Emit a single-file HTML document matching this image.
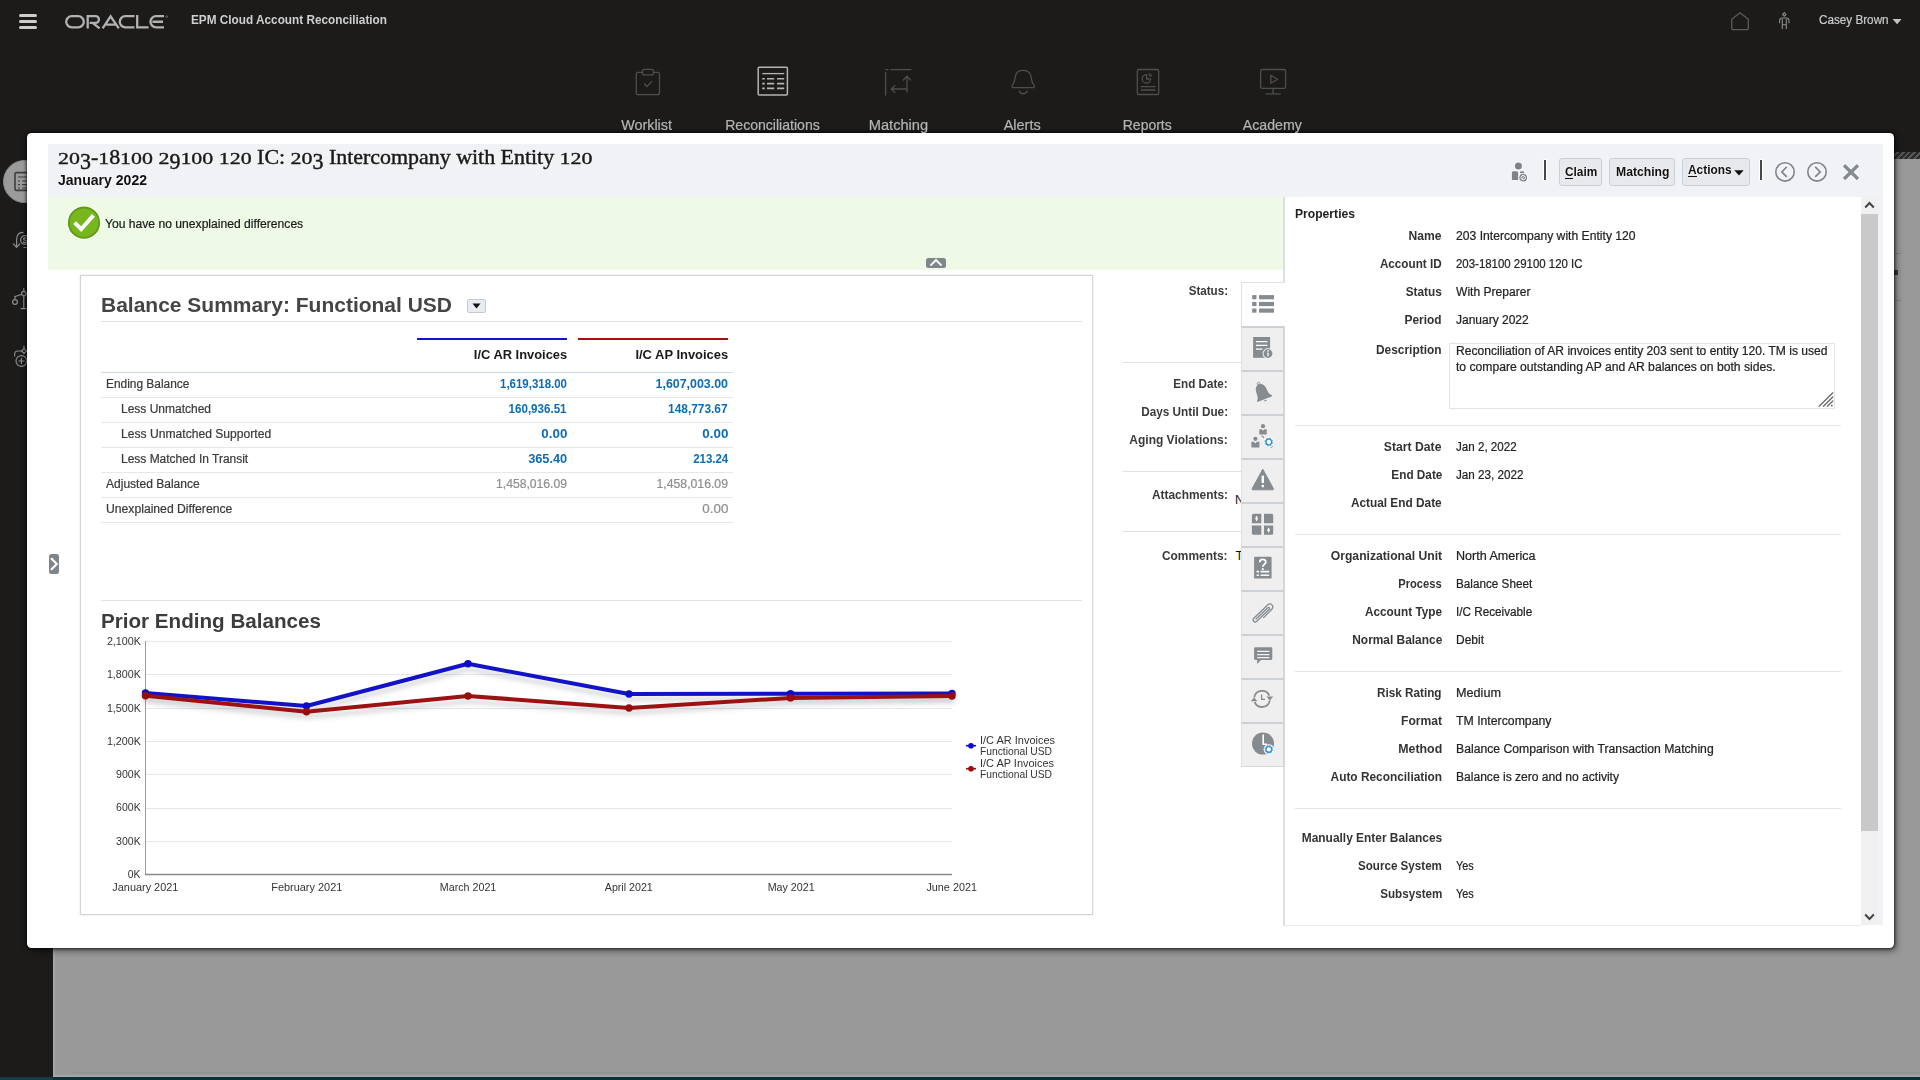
<!DOCTYPE html>
<html><head><meta charset="utf-8"><title>Reconciliation</title>
<style>
*{box-sizing:border-box;margin:0;padding:0}
html,body{width:1920px;height:1080px;overflow:hidden;background:#1c1b1a;font-family:"Liberation Sans",sans-serif;}
.a{position:absolute}
.t{position:absolute;white-space:pre;line-height:1}
.sf{font-family:"Liberation Serif",serif}
.d{display:inline-block;transform:scaleY(.8);transform-origin:0 83.75%}.q{display:inline-block;transform:translateY(.23em) scaleY(1.06);transform-origin:0 83.75%}
.hl{position:absolute;height:1px;background:#d9e0e6}
svg{position:absolute;overflow:visible}
#greybg{left:53px;top:152px;width:1867px;height:925px;background:#999}
#teal{left:0;top:1077px;width:1920px;height:3px;background:linear-gradient(90deg,#163d43 0 53px,#0b3136 53px)}
#dlg{left:27px;top:133px;width:1867px;height:815px;background:#fff;border-radius:4.5px;box-shadow:0 0 3px 1px rgba(0,0,0,.6),2px 3px 7px rgba(0,0,0,.45)}
#dhead{left:48px;top:144px;width:1835px;height:781px;background:#f1f2f6}
#white{left:48px;top:270px;width:1236px;height:655px;background:#fff}
#green{left:48px;top:197px;width:1235px;height:73px;background:#effae6}
#panel{left:80px;top:275px;width:1013px;height:640px;background:#fff;border:1px solid #d4d4d4;box-shadow:0 0 2px rgba(0,0,0,.12)}
#props{left:1283px;top:197px;width:578px;height:729px;background:#fff;border-left:2px solid #dbdfe4;border-bottom:1px solid #ececec}
#sbtrack{left:1861px;top:197px;width:17px;height:728px;background:#f0f0f0}
#sbthumb{left:1861px;top:214px;width:17px;height:617px;background:#c9c9c9}
.btn{position:absolute;top:158px;height:28px;border:1px solid #c8d1da;border-radius:3px;background:#e8e9ec}
.sep{position:absolute;top:160px;width:2px;height:20px;background:#474747}
.tab{position:absolute;left:1241px;width:44px;height:44px;background:#efefef;border-left:1px solid #dde1e5;border-right:2px solid #d3d6db;border-top:2px solid #cdd1d6}
</style></head><body>
<div class="a" id="greybg"></div>
<div class="a" id="teal"></div>
<!-- hamburger -->
<div class="a" style="left:19px;top:14px;width:18px;height:3px;border-radius:1.5px;background:#cdcdcd"></div>
<div class="a" style="left:19px;top:20px;width:18px;height:3px;border-radius:1.5px;background:#cdcdcd"></div>
<div class="a" style="left:19px;top:26px;width:18px;height:3px;border-radius:1.5px;background:#cdcdcd"></div>
<!-- ORACLE logo -->
<svg style="left:65px;top:14.8px" width="104" height="14" viewBox="0 0 104 14"><g fill="none" stroke="#b2b2b2" stroke-width="2.3">
<path d="M6.75 1.2 H13.25 A5.55 5.55 0 0 1 13.25 12.3 H6.75 A5.55 5.55 0 0 1 6.75 1.2 Z"/>
<path d="M22.7 13.6 V1.2 H30.6 A3.3 3.3 0 0 1 30.6 7.9 H24.6 M27.6 7.9 L34.6 13.4"/>
<path d="M37.6 13.4 L45.6 1.4 L53.8 13.4 M41.2 9.6 H51"/>
<path d="M69.5 1.2 H60.3 A5.55 5.55 0 0 0 60.3 12.3 H69.5"/>
<path d="M72.2 0 V12.3 H83.6"/>
<path d="M99 1.2 H91 A5.55 5.55 0 0 0 91 12.3 H99 M87.4 6.75 H98"/>
</g><circle cx="101.6" cy="1.6" r="0.9" fill="none" stroke="#9a9a9a" stroke-width=".5"/></svg>
<!-- nav icons -->
<svg style="left:0;top:0" width="1920" height="133" viewBox="0 0 1920 133"><g fill="none" stroke="#4e4e4e" stroke-width="1.3" stroke-linecap="round" stroke-linejoin="round">
<!-- worklist -->
<rect x="636.3" y="72.3" width="23.2" height="22.4" rx="2"/><rect x="642.5" y="69.3" width="11" height="5.6" rx="2" fill="#1c1b1a"/><path d="M644.6 84 L647 86.6 L651.6 81.6"/>
<!-- matching -->
<path d="M885.6 72.5 V95 M885.8 69.6 H888 M891 69.6 H911 M907 92 V76.5 M903.4 80 L907 76.2 L910.6 80 M907 89 H891.5 M895 85.4 L891.2 89 L895 92.6"/>
<!-- alerts -->
<path d="M1013 87.6 H1033.5 C1034.6 87.6 1034.6 86 1034 85.2 C1031.6 82 1031.4 80 1031.2 77.6 C1030.8 73 1027.6 70.4 1023.2 70.4 C1018.8 70.4 1015.6 73 1015.2 77.6 C1015 80 1014.8 82 1012.4 85.2 C1011.8 86 1011.9 87.6 1013 87.6 Z"/><path d="M1019.2 91 C1020.6 94.6 1025.8 94.6 1027.2 91"/>
<!-- reports -->
<rect x="1137.3" y="69.5" width="21.4" height="25" rx="1.6"/><path d="M1150.6 79 A4.2 4.2 0 1 1 1146.6 74.6 V79 Z"/><path d="M1149.6 73.6 A3 3 0 0 1 1151.8 76 L1149.6 76 Z" stroke-width="1"/><path d="M1141.2 86.7 H1155 M1141.2 90 H1155"/>
<!-- academy -->
<rect x="1260.6" y="69.5" width="25" height="18.8" rx="1.6"/><path d="M1273.1 88.4 V93.8 M1266 93.9 H1280.2 M1270.8 75.2 V83.2 L1277.6 79.2 Z"/>
</g>
<!-- reconciliations (active) -->
<g fill="none" stroke="#b4b4b4" stroke-width="1.5"><rect x="758.2" y="67.2" width="29.2" height="27.8" rx="1"/><path d="M762.2 73.6 H784.2" stroke-width="1.3"/>
<path d="M762.2 78.8 H764.8 M767 78.8 H774.2 M777 78.8 H784.2 M762.2 83.6 H764.8 M767 83.6 H774.2 M777 83.6 H784.2 M762.2 88.4 H764.8 M767 88.4 H774.2 M777 88.4 H784.2" stroke-width="1.6"/></g>
<!-- home -->
<path d="M1731.8 28.6 V19.2 L1740 12.8 L1748.3 19.2 V28.6 Q1748.3 29.6 1747.3 29.6 H1732.8 Q1731.8 29.6 1731.8 28.6 Z" fill="none" stroke="#5c5c5c" stroke-width="1.3" stroke-linejoin="round"/>
<!-- person -->
<g fill="none" stroke="#8c8c8c" stroke-width="1.1"><path d="M1784.3 12.6 L1786 14.4 L1784.3 16.2 L1782.6 14.4 Z"/><path d="M1779.6 23.2 V20.6 Q1779.6 18 1782.4 18 H1786.2 Q1789 18 1789 20.6 V23.2 M1782.3 19 V29 M1786.3 19 V29 M1782.3 24.8 H1786.3"/></g>
<!-- user arrow -->
<path d="M1892.6 19 H1901.6 L1897.1 24.2 Z" fill="#c4c4c4"/>
</svg>

<!-- left nav (mostly hidden behind dialog) -->
<div class="a" style="left:3px;top:160px;width:43px;height:43px;border-radius:50%;background:#9b9b9b;border:1px solid #8a8a8a"></div>
<svg style="left:0;top:150px" width="53" height="240" viewBox="0 150 53 240"><g fill="none" stroke="#3e3e3e" stroke-width="1.6">
<rect x="15" y="172.6" width="20" height="17.8" rx="1.5"/><path d="M18 177 H32 M18 181 H20 M22 181 H32 M18 184.6 H20 M22 184.6 H32 M18 188 H20 M22 188 H32" stroke-width="1.2"/></g>
<g fill="none" stroke="#8a8a8a" stroke-width="1.2" stroke-linecap="round">
<path d="M23 232.4 C18 232.4 16.6 236 16.6 240 V247 M13.6 244 L16.6 247.4 L19.6 244"/><circle cx="25" cy="240" r="4.4"/><path d="M26.4 238.4 C25 237.2 23.4 238 23.6 239.2 C23.8 240.6 26.6 240 26.6 241.6 C26.6 243 24.4 243 23.4 242"/><path d="M24 247.5 H30"/>
<path d="M23.8 288.6 V308 M21 308.6 H30 M15 296.5 L23.8 293.6 L30 295.5"/><circle cx="23.8" cy="293.6" r="2.2" fill="#1c1b1a"/><circle cx="15" cy="302" r="2.4"/><path d="M15 296.5 V299.6"/>
<path d="M14.6 356 V354.4 Q14.6 351 18 351 H22"/><path d="M24 348.6 L26.4 351 L24 353.4 L21.6 351 Z"/><path d="M24 346 V348 M26.6 351 H28"/><circle cx="21.4" cy="361" r="5.4"/><path d="M21.4 358.4 V363.6 M18.8 361 H24"/>
</g></svg>
<!-- right side: hatched strip + hints of underlying page -->
<div class="a" style="left:1894px;top:152px;width:26px;height:7px;background:repeating-linear-gradient(135deg,#2a2a2a 0 2px,#565656 2px 4px)"></div>
<div class="a" style="left:1894px;top:253px;width:7px;height:1px;background:#858585"></div>
<div class="a" style="left:1894px;top:270px;width:4px;height:5px;background:#3a3a3a"></div>
<div class="a" style="left:1894px;top:300px;width:7px;height:1px;background:#858585"></div>
<div class="a" style="left:73px;top:1072px;width:1847px;height:1px;background:#8a9191"></div>
<div class="a" style="left:53px;top:1075px;width:1867px;height:2px;background:#a5a5a5"></div>
<div class="a" style="left:53px;top:159px;width:2px;height:918px;background:#a6a6a6"></div>

<div class="a" id="dlg"></div>
<div class="a" id="dhead"></div>
<div class="a" id="white"></div>
<div class="a" id="green"></div>
<div class="a" id="panel"></div>
<!-- person/claim icon -->
<svg style="left:1508px;top:160px" width="24" height="24" viewBox="1508 160 24 24"><g style="filter:drop-shadow(0 0 1px #fff)">
<circle cx="1518.4" cy="166.1" r="3.5" fill="#7d8388"/>
<path d="M1511.9 172.6 Q1511.9 171.2 1513.3 171.2 H1516.6 Q1518.2 171.2 1518.2 172.8 V179.9 H1511.9 Z" fill="#7d8388"/>
<path d="M1520 173.2 V172.4 Q1520 171.2 1521.2 171.2 H1523 Q1524.2 171.2 1524.2 172.4 V173.2 Z" fill="#7d8388"/>
<circle cx="1523.2" cy="177.6" r="4.6" fill="#fff"/><circle cx="1523.2" cy="177.6" r="3.9" fill="#7d8388"/>
<circle cx="1523.2" cy="177.6" r="2.2" fill="none" stroke="#fff" stroke-width=".9"/><path d="M1521.7 179.1 L1524.7 176.1" stroke="#fff" stroke-width=".9"/></g></svg>
<div class="sep" style="left:1544px;box-shadow:0 0 1px 1px #fff"></div>
<div class="btn" style="left:1559px;width:43px"></div>
<div class="btn" style="left:1609px;width:66px"></div>
<div class="btn" style="left:1682px;width:68px"></div>
<div class="a" style="left:1565px;top:177.6px;width:8px;height:1.2px;background:#111"></div>
<div class="a" style="left:1688px;top:176.4px;width:8.5px;height:1px;background:#111"></div>
<svg style="left:1734px;top:169.6px" width="10" height="6" viewBox="0 0 10 6"><path d="M0.3 0.2 H9.7 L5 5.6 Z" fill="#111"/></svg>
<div class="sep" style="left:1760px;box-shadow:0 0 1px 1px #fff"></div>
<svg style="left:1770px;top:158px" width="95" height="28" viewBox="1770 158 95 28"><g fill="none" stroke="#7d8388" style="filter:drop-shadow(0 0 1px #fff)">
<circle cx="1785" cy="171.9" r="9.2" stroke-width="1.6"/><path d="M1786.8 166.9 L1781.8 171.9 L1786.8 176.9" stroke-width="1.7"/>
<circle cx="1817" cy="171.9" r="9.2" stroke-width="1.6"/><path d="M1815.2 166.9 L1820.2 171.9 L1815.2 176.9" stroke-width="1.7"/>
<path d="M1844 165.2 L1858 179 M1858 165.2 L1844 179" stroke="#858a8f" stroke-width="3.3"/></g></svg>
<!-- green check -->
<svg style="left:66px;top:204px" width="36" height="37" viewBox="66 204 36 37">
<circle cx="84" cy="222.7" r="17" fill="#fff"/><circle cx="84" cy="222.7" r="15.2" fill="#77b61c" stroke="#5f9c16" stroke-width="1.8"/>
<path d="M74.6 222.6 L81.2 229.2 L93.4 215.4" fill="none" stroke="#fff" stroke-width="4"/></svg>
<!-- collapse handle on green band -->
<div class="a" style="left:926px;top:258px;width:20px;height:10px;border-radius:2.5px;background:#7e858b"></div>
<svg style="left:929px;top:258px" width="14" height="10" viewBox="0 0 14 10"><path d="M1.4 7.6 L7 2 L12.6 7.6" fill="none" stroke="#fff" stroke-width="2"/></svg>
<!-- left splitter handle -->
<div class="a" style="left:49px;top:554px;width:10px;height:20px;border-radius:2.5px;background:#7e858b"></div>
<svg style="left:50px;top:557px" width="9" height="14" viewBox="0 0 9 14"><path d="M1.6 1.8 L6.8 7 L1.6 12.2" fill="none" stroke="#fff" stroke-width="2.2" stroke-linecap="round"/></svg>

<!-- balance summary lines -->
<div class="hl" style="left:101px;top:321px;width:981px;background:#dde3e9"></div>
<div class="a" style="left:467px;top:299px;width:19px;height:14px;border:1px solid #c3ccd5;border-radius:2px;background:#e9ecf0"></div>
<svg style="left:472px;top:303px" width="9" height="6" viewBox="0 0 9 6"><path d="M0.5 0.5 L8.5 0.5 L4.5 5.5 Z" fill="#111"/></svg>
<div class="a" style="left:417px;top:338px;width:150px;height:2px;background:#1313cc"></div>
<div class="a" style="left:578px;top:338px;width:150px;height:2px;background:#a51111"></div>
<div class="hl" style="left:101px;top:372px;width:632px;background:#cfd9e2"></div>
<div class="hl" style="left:101px;top:397px;width:632px;background:#e6e9ec"></div>
<div class="hl" style="left:101px;top:422px;width:632px;background:#e6e9ec"></div>
<div class="hl" style="left:101px;top:447px;width:632px;background:#e6e9ec"></div>
<div class="hl" style="left:101px;top:472px;width:632px;background:#e6e9ec"></div>
<div class="hl" style="left:101px;top:497px;width:632px;background:#e6e9ec"></div>
<div class="hl" style="left:101px;top:522px;width:632px;background:#e6e9ec"></div>
<div class="hl" style="left:101px;top:600px;width:981px;background:#dde3e9"></div>

<svg style="left:0;top:0" width="1920" height="1080" viewBox="0 0 1920 1080">
<defs><filter id="sh" x="-5%" y="-50%" width="110%" height="200%"><feGaussianBlur stdDeviation="2.2"/></filter></defs>
<g stroke="#e3e8ed" stroke-width="1" shape-rendering="crispEdges">
<line x1="146" x2="952" y1="641.5" y2="641.5"/><line x1="146" x2="952" y1="674.5" y2="674.5"/><line x1="146" x2="952" y1="708.5" y2="708.5"/><line x1="146" x2="952" y1="741.5" y2="741.5"/><line x1="146" x2="952" y1="774.5" y2="774.5"/><line x1="146" x2="952" y1="808.5" y2="808.5"/><line x1="146" x2="952" y1="841.5" y2="841.5"/>
</g>
<line x1="145.5" x2="145.5" y1="641" y2="875" stroke="#9a9a9a" stroke-width="1"/>
<line x1="145" x2="952" y1="874.5" y2="874.5" stroke="#8a8a8a" stroke-width="1.4"/>
<g fill="none" stroke-linejoin="round" stroke-linecap="round">
<polyline points="145.5,698 306.5,711 468,669 629,699 790.5,699 952,698.5" stroke="#5a6270" stroke-opacity=".2" stroke-width="5" filter="url(#sh)"/>
<polyline points="145.5,701 306.5,717 468,701.5 629,713 790.5,703 952,701" stroke="#5a6270" stroke-opacity=".2" stroke-width="5" filter="url(#sh)"/>
<polyline points="145.5,693 306.5,706 468,663.8 629,694 790.5,693.7 952,693.4" stroke="#1212c6" stroke-width="4"/>
<polyline points="145.5,695.8 306.5,711.8 468,696 629,708 790.5,697.9 952,696" stroke="#9c1212" stroke-width="4"/>
</g>
<g fill="#0b0bd0"><circle cx="145.5" cy="693" r="3.7"/><circle cx="306.5" cy="706" r="3.7"/><circle cx="468" cy="663.8" r="3.7"/><circle cx="629" cy="694" r="3.7"/><circle cx="790.5" cy="693.7" r="3.7"/><circle cx="952" cy="693.4" r="3.7"/></g>
<g fill="#9a0c0c"><circle cx="145.5" cy="695.8" r="3.7"/><circle cx="306.5" cy="711.8" r="3.7"/><circle cx="468" cy="696" r="3.7"/><circle cx="629" cy="708" r="3.7"/><circle cx="790.5" cy="697.9" r="3.7"/><circle cx="952" cy="696" r="3.7"/></g>
<!-- legend -->
<line x1="966" x2="976" y1="745.7" y2="745.7" stroke="#1010c8" stroke-width="1.6"/><circle cx="971" cy="745.7" r="2.8" fill="#0b0bd0"/>
<line x1="966" x2="976" y1="768.7" y2="768.7" stroke="#9c1212" stroke-width="1.6"/><circle cx="971" cy="768.7" r="2.8" fill="#9a0c0c"/>
</svg>

<div class="hl" style="left:1123px;top:362px;width:119px;background:#dbe2e8"></div>
<div class="hl" style="left:1123px;top:471px;width:119px;background:#dbe2e8"></div>
<div class="hl" style="left:1123px;top:531px;width:119px;background:#dbe2e8"></div>

<div class="a" id="props"></div>
<div class="a" id="sbtrack"></div>
<div class="a" id="sbthumb"></div>
<div class="a" style="left:1449px;top:343px;width:386px;height:66px;border:1px solid #e2e6ea;background:#fff"></div>
<svg style="left:1816px;top:390px" width="18" height="18" viewBox="1816 390 18 18"><g stroke="#666" stroke-width="1.25" stroke-linecap="round"><path d="M1819.2 406.2 L1832.8 392.8 M1823.4 406.2 L1832.8 397 M1827.4 406.2 L1832.8 401"/></g><rect x="1831" y="404.8" width="1.6" height="1.6" fill="#666"/></svg>
<div class="hl" style="left:1295px;top:425px;width:546px;background:#e0e6ea"></div>
<div class="hl" style="left:1295px;top:534px;width:546px;background:#e0e6ea"></div>
<div class="hl" style="left:1295px;top:671px;width:546px;background:#e0e6ea"></div>
<div class="hl" style="left:1295px;top:808px;width:546px;background:#e0e6ea"></div>
<svg style="left:1864px;top:201px" width="11" height="8" viewBox="0 0 11 8"><path d="M1.2 6.5 L5.5 2 L9.8 6.5" fill="none" stroke="#444" stroke-width="2"/></svg>
<svg style="left:1864px;top:913px" width="11" height="8" viewBox="0 0 11 8"><path d="M1.2 1.5 L5.5 6 L9.8 1.5" fill="none" stroke="#444" stroke-width="2"/></svg>

<!-- partial cut-off text -->
<div class="a" style="left:1234px;top:490px;width:7px;height:20px;overflow:hidden"><div class="t" style="left:1px;top:4.2px;font-size:12.5px;color:#111">No</div></div>
<div class="a" style="left:1234px;top:546px;width:7px;height:20px;overflow:hidden"><div class="t" style="left:1.4px;top:4.4px;font-size:12.5px;color:#111">Th</div></div>
<!-- tabs -->
<div class="tab" style="top:325.5px"></div><div class="tab" style="top:369.5px"></div><div class="tab" style="top:413.5px"></div><div class="tab" style="top:457.5px"></div><div class="tab" style="top:501.5px"></div><div class="tab" style="top:545.5px"></div><div class="tab" style="top:589.5px"></div><div class="tab" style="top:633.5px"></div><div class="tab" style="top:677.5px"></div><div class="tab" style="top:721.5px;height:45px;border-bottom:1px solid #d6dade"></div>
<div class="a" style="left:1240.5px;top:282px;width:44.5px;height:43.5px;background:#fff;border:1.5px solid #dce1e6;border-right:0;border-bottom:0"></div>
<svg style="left:1241px;top:282px" width="44" height="484" viewBox="1241 282 44 484">
<g fill="#868b90">
<!-- 1 list -->
<rect x="1252.2" y="295.1" width="4.3" height="4.2"/><rect x="1259" y="295.1" width="15" height="4.2"/><rect x="1252.2" y="301.9" width="4.3" height="4.2"/><rect x="1259" y="301.9" width="15" height="4.2"/><rect x="1252.2" y="308.5" width="4.3" height="4.2"/><rect x="1259" y="308.5" width="15" height="4.2"/>
<!-- 2 doc info -->
<rect x="1253.1" y="337" width="17" height="20.8"/>
<!-- 3 bell -->
<g transform="translate(-0.8 -0.4) rotate(-22 1262.5 392) translate(1262.5 392) scale(.93) translate(-1262.5 -392)"><path d="M1254.2 399.4 C1257 396.6 1256.6 393 1256.8 390.4 C1257.2 386 1259.6 383.6 1262.6 383.6 C1265.6 383.6 1268 386 1268.4 390.4 C1268.6 393 1268.2 396.6 1271 399.4 C1271.6 400 1271.2 400.8 1270.4 400.8 H1254.8 C1254 400.8 1253.6 400 1254.2 399.4 Z"/><circle cx="1262.6" cy="382.8" r="1.5" fill="none" stroke="#868b90" stroke-width=".8"/><path d="M1261 402 H1264.2 V403 H1261 Z"/></g>
<!-- 4 people -->
<circle cx="1263" cy="426.2" r="2.1"/><path d="M1259.3 429.2 H1261.6 L1263 430.8 L1264.4 429.2 H1266.7 V434.6 H1259.3 Z"/>
<circle cx="1255.4" cy="438.8" r="2.1"/><path d="M1251.4 441.8 H1254 L1255.4 443.4 L1256.8 441.8 H1259.4 V447.4 H1251.4 Z"/>
<!-- 5 warning -->
<path d="M1262.8 469.2 L1273.4 488.6 Q1273.8 489.8 1272.6 489.8 H1252.8 Q1251.6 489.8 1252.2 488.6 Z" stroke="#868b90" stroke-width="1" stroke-linejoin="round"/>
<!-- 6 grid -->
<path d="M1251.9 515.4 Q1251.9 513.8 1253.5 513.8 H1261.3 V523.2 H1251.9 Z M1264 513.8 H1271.6 Q1273.2 513.8 1273.2 515.4 V523.2 H1264 Z M1251.9 525.4 H1261.3 V534.8 H1253.5 Q1251.9 534.8 1251.9 533.2 Z M1264 525.4 H1273.2 V533.2 Q1273.2 534.8 1271.6 534.8 H1264 Z"/>
<!-- 7 question doc -->
<rect x="1254.1" y="556.8" width="17.5" height="21.8" rx="1.2"/>
<!-- 9 comment -->
<path d="M1255.4 647.2 H1271 Q1272.3 647.2 1272.3 648.5 V658.6 Q1272.3 659.9 1271 659.9 H1261 L1257.2 664 V659.9 H1255.4 Q1254.1 659.9 1254.1 658.6 V648.5 Q1254.1 647.2 1255.4 647.2 Z"/>
<!-- 11 clock -->
<circle cx="1263" cy="743.6" r="11"/>
</g>
<g fill="none" stroke="#fff">
<path d="M1256 341.6 H1267.4 M1256 345.4 H1267.4 M1256 349.2 H1262.4" stroke-width="1.3"/>
<path d="M1262.8 475.6 V483" stroke-width="2.4"/><path d="M1262.8 484.8 V487.2" stroke-width="2.4"/>
<path d="M1257.2 654.6 H1269.4 M1257.2 651.4 H1269.4 M1257.2 657.6 H1269.4" stroke-width="1.2" opacity=".9"/>
<path d="M1263.2 734.6 V744.2 H1267" stroke-width="1.6"/>
<path d="M1256.6 571.6 H1259 M1260.6 571.6 H1269.2 M1256.6 575.2 H1259 M1260.6 575.2 H1269.2" stroke-width="1.6"/>
<path d="M1259.8 562.2 C1259.8 558.6 1265.8 558.6 1265.8 562 C1265.8 564.4 1262.8 564.4 1262.8 566.8" stroke-width="1.8"/><path d="M1262.8 568.2 V570" stroke-width="1.8"/>
</g>
<g fill="#fff"><path d="M1256.6 515.6 L1258 518.5 L1256.6 521.4 L1255.2 518.5 Z M1268.6 527.2 L1270 530.1 L1268.6 533 L1267.2 530.1 Z"/></g>
<!-- info badge -->
<circle cx="1268" cy="353.5" r="5.4" fill="#efefef"/><circle cx="1268" cy="353.5" r="4.4" fill="#868b90"/><path d="M1268 352.6 V356.2" stroke="#fff" stroke-width="1.3"/><circle cx="1268" cy="350.9" r=".8" fill="#fff"/>
<!-- gear badge tab4 -->
<path d="M1261.6 436 Q1263.4 436.4 1263.8 438" fill="none" stroke="#868b90" stroke-width="1.2"/><path d="M1272.4 445.6 Q1272 447 1270.6 447.4" fill="none" stroke="#868b90" stroke-width="1.2"/>
<circle cx="1268.8" cy="442" r="5.2" fill="#fff"/><circle cx="1268.8" cy="442" r="2.9" fill="none" stroke="#3b96d3" stroke-width="1.5"/><circle cx="1268.8" cy="442" r="4" fill="none" stroke="#3b96d3" stroke-width=".9" stroke-dasharray="1.5 1.65"/>
<!-- paperclip -->
<g fill="none" stroke="#868b90" stroke-width="1.3" stroke-linecap="round"><path d="M1263.6 617.6 L1271.8 609.2 C1274.6 606.2 1270.6 602 1267.6 605 L1253.8 618.2 C1251.6 620.4 1254.6 623.2 1256.8 621.2 L1269.2 609.2 C1270.4 608 1269 606.8 1267.8 607.8 L1256 619"/></g>
<!-- history -->
<g fill="none" stroke="#868b90" stroke-width="1.8"><path d="M1254.2 697.4 A8 8 0 0 1 1269.4 695.6"/><path d="M1269.8 700.4 A8 8 0 0 1 1254.6 702.2"/><path d="M1261.6 694.6 V699.4 H1265" stroke-width="1.3"/></g>
<path d="M1266.4 696.6 H1273.2 L1270 700.4 Z M1250.8 701.2 H1257.6 L1254 697.4 Z" fill="#868b90"/>
<!-- gear badge tab11 -->
<circle cx="1268.8" cy="749.4" r="5.2" fill="#fff"/><circle cx="1268.8" cy="749.4" r="2.9" fill="none" stroke="#3b96d3" stroke-width="1.5"/><circle cx="1268.8" cy="749.4" r="4" fill="none" stroke="#3b96d3" stroke-width=".9" stroke-dasharray="1.5 1.65"/>
</svg>

<div class="t" style="top:13.30px;font-size:13px;color:#cfcfcf;font-weight:bold;left:191.00px;transform-origin:0 0;transform:scaleX(0.9066);">EPM Cloud Account Reconciliation</div>
<div class="t" style="top:13.00px;font-size:13px;color:#c9c9c9;-webkit-text-stroke:.22px;left:1819.20px;transform-origin:0 0;transform:scaleX(0.9002);">Casey Brown</div>
<div class="t" style="top:117.31px;font-size:15px;color:#b4b4b4;-webkit-text-stroke:.22px;left:620.47px;transform-origin:50% 0;transform:scaleX(0.9574);">Worklist</div>
<div class="t" style="top:117.31px;font-size:15px;color:#b4b4b4;-webkit-text-stroke:.22px;left:722.05px;transform-origin:50% 0;transform:scaleX(0.9376);">Reconciliations</div>
<div class="t" style="top:117.31px;font-size:15px;color:#b4b4b4;-webkit-text-stroke:.22px;left:867.56px;transform-origin:50% 0;transform:scaleX(0.9774);">Matching</div>
<div class="t" style="top:117.31px;font-size:15px;color:#b4b4b4;-webkit-text-stroke:.22px;left:1003.33px;transform-origin:50% 0;transform:scaleX(0.9650);">Alerts</div>
<div class="t" style="top:117.31px;font-size:15px;color:#b4b4b4;-webkit-text-stroke:.22px;left:1121.23px;transform-origin:50% 0;transform:scaleX(0.9328);">Reports</div>
<div class="t" style="top:117.31px;font-size:15px;color:#b4b4b4;-webkit-text-stroke:.22px;left:1241.23px;transform-origin:50% 0;transform:scaleX(0.9435);">Academy</div>
<div class="t sf" style="top:147.19px;font-size:21.5px;color:#1a1a1a;left:57.60px;transform-origin:0 0;transform:scaleX(1.0194);text-shadow:0 0 2px #fff;-webkit-text-stroke:.45px;"><span class="d">2</span><span class="d">0</span><span class="q">3</span>-<span class="d">1</span>8<span class="d">1</span><span class="d">0</span><span class="d">0</span> <span class="d">2</span><span class="q">9</span><span class="d">1</span><span class="d">0</span><span class="d">0</span> <span class="d">1</span><span class="d">2</span><span class="d">0</span> IC: <span class="d">2</span><span class="d">0</span><span class="q">3</span> Intercompany with Entity <span class="d">1</span><span class="d">2</span><span class="d">0</span></div>
<div class="t" style="top:172.76px;font-size:14px;color:#111;font-weight:bold;left:58.20px;transform-origin:0 0;transform:scaleX(1.0030);text-shadow:0 0 2px #fff;">January 2022</div>
<div class="t" style="top:166.12px;font-size:12.5px;color:#111;font-weight:bold;left:1565.00px;transform-origin:0 0;transform:scaleX(0.9487);text-shadow:0 0 2px #fff;">Claim</div>
<div class="t" style="top:166.12px;font-size:12.5px;color:#111;font-weight:bold;left:1615.60px;transform-origin:0 0;transform:scaleX(0.9734);text-shadow:0 0 2px #fff;">Matching</div>
<div class="t" style="top:164.03px;font-size:12.5px;color:#111;font-weight:bold;left:1687.60px;transform-origin:0 0;transform:scaleX(0.9511);text-shadow:0 0 2px #fff;">Actions</div>
<div class="t" style="top:217.93px;font-size:12.5px;color:#1a1a1a;-webkit-text-stroke:.22px;left:105.30px;transform-origin:0 0;transform:scaleX(0.9699);">You have no unexplained differences</div>
<div class="t" style="top:294.78px;font-size:20px;color:#454545;font-weight:bold;left:100.60px;transform-origin:0 0;transform:scaleX(1.0492);">Balance Summary: Functional USD</div>
<div class="t" style="top:348.00px;font-size:13px;color:#1a1a1a;font-weight:bold;left:472.84px;transform-origin:100% 0;transform:scaleX(0.9909);">I/C AR Invoices</div>
<div class="t" style="top:348.00px;font-size:13px;color:#1a1a1a;font-weight:bold;left:634.80px;transform-origin:100% 0;transform:scaleX(0.9957);">I/C AP Invoices</div>
<div class="t" style="top:377.62px;font-size:12.5px;color:#3a3a3a;-webkit-text-stroke:.22px;left:106.20px;transform-origin:0 0;transform:scaleX(0.9523);">Ending Balance</div>
<div class="t" style="top:402.62px;font-size:12.5px;color:#3a3a3a;-webkit-text-stroke:.22px;left:121.40px;transform-origin:0 0;transform:scaleX(0.9594);">Less Unmatched</div>
<div class="t" style="top:427.62px;font-size:12.5px;color:#3a3a3a;-webkit-text-stroke:.22px;left:121.40px;transform-origin:0 0;transform:scaleX(0.9692);">Less Unmatched Supported</div>
<div class="t" style="top:452.62px;font-size:12.5px;color:#3a3a3a;-webkit-text-stroke:.22px;left:121.40px;transform-origin:0 0;transform:scaleX(0.9585);">Less Matched In Transit</div>
<div class="t" style="top:477.62px;font-size:12.5px;color:#3a3a3a;-webkit-text-stroke:.22px;left:106.20px;transform-origin:0 0;transform:scaleX(0.9630);">Adjusted Balance</div>
<div class="t" style="top:502.63px;font-size:12.5px;color:#3a3a3a;-webkit-text-stroke:.22px;left:106.20px;transform-origin:0 0;transform:scaleX(0.9736);">Unexplained Difference</div>
<div class="t" style="top:377.62px;font-size:12.5px;color:#0d6cb6;font-weight:bold;left:494.00px;transform-origin:100% 0;transform:scaleX(0.9178);">1,619,318.00</div>
<div class="t" style="top:377.62px;font-size:12.5px;color:#0d6cb6;font-weight:bold;left:655.00px;transform-origin:100% 0;transform:scaleX(0.9918);">1,607,003.00</div>
<div class="t" style="top:402.62px;font-size:12.5px;color:#0d6cb6;font-weight:bold;left:504.44px;transform-origin:100% 0;transform:scaleX(0.9271);">160,936.51</div>
<div class="t" style="top:402.62px;font-size:12.5px;color:#0d6cb6;font-weight:bold;left:665.44px;transform-origin:100% 0;transform:scaleX(0.9510);">148,773.67</div>
<div class="t" style="top:427.62px;font-size:12.5px;color:#0d6cb6;font-weight:bold;left:542.66px;transform-origin:100% 0;transform:scaleX(1.0680);">0.00</div>
<div class="t" style="top:427.62px;font-size:12.5px;color:#0d6cb6;font-weight:bold;left:703.66px;transform-origin:100% 0;transform:scaleX(1.0680);">0.00</div>
<div class="t" style="top:452.62px;font-size:12.5px;color:#0d6cb6;font-weight:bold;left:528.77px;transform-origin:100% 0;transform:scaleX(1.0226);">365.40</div>
<div class="t" style="top:452.62px;font-size:12.5px;color:#0d6cb6;font-weight:bold;left:689.77px;transform-origin:100% 0;transform:scaleX(0.9180);">213.24</div>
<div class="t" style="top:477.62px;font-size:12.5px;color:#8f8f8f;-webkit-text-stroke:.22px;left:494.00px;transform-origin:100% 0;transform:scaleX(0.9726);">1,458,016.09</div>
<div class="t" style="top:477.62px;font-size:12.5px;color:#8f8f8f;-webkit-text-stroke:.22px;left:655.00px;transform-origin:100% 0;transform:scaleX(0.9795);">1,458,016.09</div>
<div class="t" style="top:502.63px;font-size:12.5px;color:#8f8f8f;-webkit-text-stroke:.22px;left:703.66px;transform-origin:100% 0;transform:scaleX(1.0680);">0.00</div>
<div class="t" style="top:610.58px;font-size:20px;color:#3c3c3c;font-weight:bold;left:100.60px;transform-origin:0 0;transform:scaleX(1.0310);">Prior Ending Balances</div>
<div class="t" style="top:635.99px;font-size:11px;color:#333;left:105.62px;transform-origin:100% 0;transform:scaleX(0.9749);">2,100K</div>
<div class="t" style="top:669.19px;font-size:11px;color:#333;left:105.62px;transform-origin:100% 0;transform:scaleX(0.9749);">1,800K</div>
<div class="t" style="top:702.69px;font-size:11px;color:#333;left:105.62px;transform-origin:100% 0;transform:scaleX(0.9749);">1,500K</div>
<div class="t" style="top:735.99px;font-size:11px;color:#333;left:105.62px;transform-origin:100% 0;transform:scaleX(0.9749);">1,200K</div>
<div class="t" style="top:768.99px;font-size:11px;color:#333;left:114.80px;transform-origin:100% 0;transform:scaleX(0.9571);">900K</div>
<div class="t" style="top:802.09px;font-size:11px;color:#333;left:114.80px;transform-origin:100% 0;transform:scaleX(0.9571);">600K</div>
<div class="t" style="top:835.69px;font-size:11px;color:#333;left:114.80px;transform-origin:100% 0;transform:scaleX(0.9571);">300K</div>
<div class="t" style="top:869.19px;font-size:11px;color:#333;left:127.03px;transform-origin:100% 0;transform:scaleX(0.9429);">0K</div>
<div class="t" style="top:881.79px;font-size:11px;color:#333;left:111.66px;transform-origin:50% 0;transform:scaleX(0.9899);">January 2021</div>
<div class="t" style="top:881.79px;font-size:11px;color:#333;left:270.73px;transform-origin:50% 0;transform:scaleX(0.9924);">February 2021</div>
<div class="t" style="top:881.79px;font-size:11px;color:#333;left:438.95px;transform-origin:50% 0;transform:scaleX(0.9726);">March 2021</div>
<div class="t" style="top:881.79px;font-size:11px;color:#333;left:603.93px;transform-origin:50% 0;transform:scaleX(0.9688);">April 2021</div>
<div class="t" style="top:881.79px;font-size:11px;color:#333;left:766.64px;transform-origin:50% 0;transform:scaleX(0.9728);">May 2021</div>
<div class="t" style="top:881.79px;font-size:11px;color:#333;left:926.10px;transform-origin:50% 0;transform:scaleX(0.9827);">June 2021</div>
<div class="t" style="top:734.99px;font-size:11px;color:#333;left:980.00px;transform-origin:0 0;transform:scaleX(0.9973);">I/C AR Invoices</div>
<div class="t" style="top:745.69px;font-size:11px;color:#333;left:980.00px;transform-origin:0 0;transform:scaleX(0.9345);">Functional USD</div>
<div class="t" style="top:757.99px;font-size:11px;color:#333;left:980.00px;transform-origin:0 0;transform:scaleX(0.9947);">I/C AP Invoices</div>
<div class="t" style="top:768.69px;font-size:11px;color:#333;left:980.00px;transform-origin:0 0;transform:scaleX(0.9345);">Functional USD</div>
<div class="t" style="top:284.40px;font-size:13px;color:#3a3a3a;font-weight:bold;left:1183.54px;transform-origin:100% 0;transform:scaleX(0.8942);">Status:</div>
<div class="t" style="top:377.00px;font-size:13px;color:#3a3a3a;font-weight:bold;left:1166.93px;transform-origin:100% 0;transform:scaleX(0.8966);">End Date:</div>
<div class="t" style="top:405.00px;font-size:13px;color:#3a3a3a;font-weight:bold;left:1131.52px;transform-origin:100% 0;transform:scaleX(0.9045);">Days Until Due:</div>
<div class="t" style="top:433.00px;font-size:13px;color:#3a3a3a;font-weight:bold;left:1120.94px;transform-origin:100% 0;transform:scaleX(0.9217);">Aging Violations:</div>
<div class="t" style="top:488.00px;font-size:13px;color:#3a3a3a;font-weight:bold;left:1144.52px;transform-origin:100% 0;transform:scaleX(0.9172);">Attachments:</div>
<div class="t" style="top:549.00px;font-size:13px;color:#3a3a3a;font-weight:bold;left:1156.08px;transform-origin:100% 0;transform:scaleX(0.9173);">Comments:</div>
<div class="t" style="top:207.00px;font-size:13px;color:#222;font-weight:bold;left:1294.70px;transform-origin:0 0;transform:scaleX(0.9329);">Properties</div>
<div class="t" style="top:229.40px;font-size:13px;color:#333;font-weight:bold;left:1406.48px;transform-origin:100% 0;transform:scaleX(0.9316);">Name</div>
<div class="t" style="top:229.83px;font-size:12.5px;color:#222;-webkit-text-stroke:.22px;left:1455.80px;transform-origin:0 0;transform:scaleX(0.9717);">203 Intercompany with Entity 120</div>
<div class="t" style="top:257.40px;font-size:13px;color:#333;font-weight:bold;left:1373.28px;transform-origin:100% 0;transform:scaleX(0.8991);">Account ID</div>
<div class="t" style="top:257.82px;font-size:12.5px;color:#222;-webkit-text-stroke:.22px;left:1455.80px;transform-origin:0 0;transform:scaleX(0.9146);">203-18100 29100 120 IC</div>
<div class="t" style="top:285.40px;font-size:13px;color:#333;font-weight:bold;left:1402.17px;transform-origin:100% 0;transform:scaleX(0.9060);">Status</div>
<div class="t" style="top:285.82px;font-size:12.5px;color:#222;-webkit-text-stroke:.22px;left:1455.80px;transform-origin:0 0;transform:scaleX(0.9649);">With Preparer</div>
<div class="t" style="top:313.40px;font-size:13px;color:#333;font-weight:bold;left:1401.43px;transform-origin:100% 0;transform:scaleX(0.9143);">Period</div>
<div class="t" style="top:313.82px;font-size:12.5px;color:#222;-webkit-text-stroke:.22px;left:1455.80px;transform-origin:0 0;transform:scaleX(0.9595);">January 2022</div>
<div class="t" style="top:343.40px;font-size:13px;color:#333;font-weight:bold;left:1370.38px;transform-origin:100% 0;transform:scaleX(0.9159);">Description</div>
<div class="t" style="top:440.40px;font-size:13px;color:#333;font-weight:bold;left:1380.48px;transform-origin:100% 0;transform:scaleX(0.9378);">Start Date</div>
<div class="t" style="top:440.82px;font-size:12.5px;color:#222;-webkit-text-stroke:.22px;left:1455.80px;transform-origin:0 0;transform:scaleX(0.9289);">Jan 2, 2022</div>
<div class="t" style="top:468.40px;font-size:13px;color:#333;font-weight:bold;left:1385.56px;transform-origin:100% 0;transform:scaleX(0.9052);">End Date</div>
<div class="t" style="top:468.82px;font-size:12.5px;color:#222;-webkit-text-stroke:.22px;left:1455.80px;transform-origin:0 0;transform:scaleX(0.9337);">Jan 23, 2022</div>
<div class="t" style="top:496.40px;font-size:13px;color:#333;font-weight:bold;left:1342.21px;transform-origin:100% 0;transform:scaleX(0.9108);">Actual End Date</div>
<div class="t" style="top:549.40px;font-size:13px;color:#333;font-weight:bold;left:1322.73px;transform-origin:100% 0;transform:scaleX(0.9348);">Organizational Unit</div>
<div class="t" style="top:549.82px;font-size:12.5px;color:#222;-webkit-text-stroke:.22px;left:1455.80px;transform-origin:0 0;transform:scaleX(1.0037);">North America</div>
<div class="t" style="top:577.40px;font-size:13px;color:#333;font-weight:bold;left:1391.31px;transform-origin:100% 0;transform:scaleX(0.8578);">Process</div>
<div class="t" style="top:577.82px;font-size:12.5px;color:#222;-webkit-text-stroke:.22px;left:1455.80px;transform-origin:0 0;transform:scaleX(0.9371);">Balance Sheet</div>
<div class="t" style="top:605.40px;font-size:13px;color:#333;font-weight:bold;left:1356.90px;transform-origin:100% 0;transform:scaleX(0.9059);">Account Type</div>
<div class="t" style="top:605.82px;font-size:12.5px;color:#222;-webkit-text-stroke:.22px;left:1455.80px;transform-origin:0 0;transform:scaleX(0.9373);">I/C Receivable</div>
<div class="t" style="top:633.40px;font-size:13px;color:#333;font-weight:bold;left:1343.63px;transform-origin:100% 0;transform:scaleX(0.9159);">Normal Balance</div>
<div class="t" style="top:633.82px;font-size:12.5px;color:#222;-webkit-text-stroke:.22px;left:1455.80px;transform-origin:0 0;transform:scaleX(0.9593);">Debit</div>
<div class="t" style="top:686.40px;font-size:13px;color:#333;font-weight:bold;left:1370.38px;transform-origin:100% 0;transform:scaleX(0.9019);">Risk Rating</div>
<div class="t" style="top:686.82px;font-size:12.5px;color:#222;-webkit-text-stroke:.22px;left:1455.80px;transform-origin:0 0;transform:scaleX(1.0119);">Medium</div>
<div class="t" style="top:714.40px;font-size:13px;color:#333;font-weight:bold;left:1397.84px;transform-origin:100% 0;transform:scaleX(0.9305);">Format</div>
<div class="t" style="top:714.82px;font-size:12.5px;color:#222;-webkit-text-stroke:.22px;left:1455.80px;transform-origin:0 0;transform:scaleX(0.9818);">TM Intercompany</div>
<div class="t" style="top:742.40px;font-size:13px;color:#333;font-weight:bold;left:1395.68px;transform-origin:100% 0;transform:scaleX(0.9520);">Method</div>
<div class="t" style="top:742.82px;font-size:12.5px;color:#222;-webkit-text-stroke:.22px;left:1455.80px;transform-origin:0 0;transform:scaleX(0.9760);">Balance Comparison with Transaction Matching</div>
<div class="t" style="top:770.40px;font-size:13px;color:#333;font-weight:bold;left:1319.84px;transform-origin:100% 0;transform:scaleX(0.9135);">Auto Reconciliation</div>
<div class="t" style="top:770.82px;font-size:12.5px;color:#222;-webkit-text-stroke:.22px;left:1455.80px;transform-origin:0 0;transform:scaleX(0.9654);">Balance is zero and no activity</div>
<div class="t" style="top:831.40px;font-size:13px;color:#333;font-weight:bold;left:1288.73px;transform-origin:100% 0;transform:scaleX(0.9166);">Manually Enter Balances</div>
<div class="t" style="top:859.40px;font-size:13px;color:#333;font-weight:bold;left:1347.96px;transform-origin:100% 0;transform:scaleX(0.8942);">Source System</div>
<div class="t" style="top:859.82px;font-size:12.5px;color:#222;-webkit-text-stroke:.22px;left:1455.80px;transform-origin:0 0;transform:scaleX(0.8674);">Yes</div>
<div class="t" style="top:887.40px;font-size:13px;color:#333;font-weight:bold;left:1372.53px;transform-origin:100% 0;transform:scaleX(0.8966);">Subsystem</div>
<div class="t" style="top:887.82px;font-size:12.5px;color:#222;-webkit-text-stroke:.22px;left:1455.80px;transform-origin:0 0;transform:scaleX(0.8674);">Yes</div>
<div class="t" style="top:344.93px;font-size:12.5px;color:#222;-webkit-text-stroke:.22px;left:1455.80px;transform-origin:0 0;transform:scaleX(0.9657);">Reconciliation of AR invoices entity 203 sent to entity 120. TM is used</div>
<div class="t" style="top:361.03px;font-size:12.5px;color:#222;-webkit-text-stroke:.22px;left:1455.80px;transform-origin:0 0;transform:scaleX(0.9712);">to compare outstanding AP and AR balances on both sides.</div>
</body></html>
